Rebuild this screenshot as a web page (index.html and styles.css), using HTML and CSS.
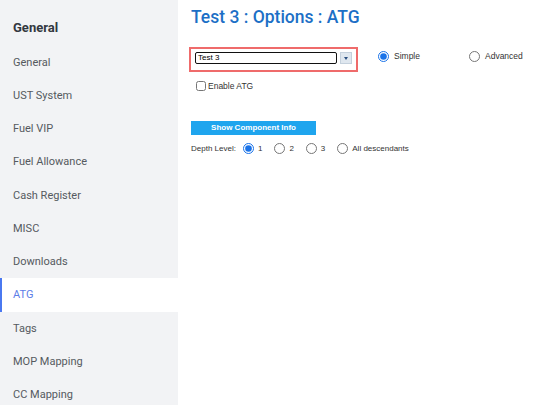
FILE: index.html
```html
<!DOCTYPE html>
<html>
<head>
<meta charset="utf-8">
<link rel="stylesheet" href="styles.css">
</head>
<body>
<div class="page">
  <nav class="sidebar">
    <div class="side-head">General</div>
    <div class="side-item">General</div>
    <div class="side-item">UST System</div>
    <div class="side-item">Fuel VIP</div>
    <div class="side-item">Fuel Allowance</div>
    <div class="side-item">Cash Register</div>
    <div class="side-item">MISC</div>
    <div class="side-item">Downloads</div>
    <div class="side-item active">ATG</div>
    <div class="side-item">Tags</div>
    <div class="side-item">MOP Mapping</div>
    <div class="side-item">CC Mapping</div>
  </nav>
  <main class="main">
    <h1 class="title">Test 3 : Options : ATG</h1>
    <div class="row-top">
      <div class="select-box">
        <div class="select-input">Test 3</div>
        <div class="select-btn"><span class="tri"></span></div>
      </div>
      <label class="opt opt-simple"><input type="radio" name="mode" checked><span>Simple</span></label>
      <label class="opt opt-adv"><input type="radio" name="mode"><span>Advanced</span></label>
    </div>
    <label class="enable"><input type="checkbox"><span>Enable ATG</span></label>
    <button class="info-btn">Show Component Info</button>
    <div class="depth">
      <span class="depth-label">Depth Level:</span>
      <label class="dopt"><input type="radio" name="depth" checked><span>1</span></label>
      <label class="dopt"><input type="radio" name="depth"><span>2</span></label>
      <label class="dopt"><input type="radio" name="depth"><span>3</span></label>
      <label class="dopt"><input type="radio" name="depth"><span>All descendants</span></label>
    </div>
  </main>
</div>
</body>
</html>
```
FILE: styles.css
```css
html, body {
  margin: 0;
  padding: 0;
  background: #ffffff;
}
.page {
  display: flex;
  width: 550px;
  height: 405px;
  overflow: hidden;
}
.sidebar {
  width: 178px;
  flex: none;
  background: #f2f3f5;
  font-family: Roboto, "Liberation Sans", sans-serif;
}
.side-head {
  height: 45.5px;
  box-sizing: border-box;
  padding: 20px 0 0 13px;
  line-height: 15px;
  font-size: 13px;
  font-weight: 700;
  color: #333840;
}
.side-item {
  height: 33.25px;
  line-height: 33.25px;
  padding-left: 13px;
  font-size: 11px;
  color: #555a60;
  box-sizing: border-box;
}
.side-item.active {
  background: #ffffff;
  color: #5b7ee8;
  border-left: 2px solid #4a78f0;
  padding-left: 11px;
}
.main {
  flex: 1;
  padding-left: 13px;
  font-family: "Liberation Sans", Arial, sans-serif;
}
.title {
  margin: 6px 0 0 0;
  font-family: Roboto, "Liberation Sans", sans-serif;
  font-size: 17.5px;
  font-weight: 500;
  line-height: 22px;
  color: #1c6fc6;
}
.row-top {
  display: flex;
  align-items: flex-start;
  margin-top: 19px;
  margin-left: -2px;
  height: 25px;
}
.select-box {
  width: 169px;
  height: 25px;
  box-sizing: border-box;
  border: 2px solid #ef6b6b;
  padding: 3px 4px 0 4px;
  display: flex;
  gap: 3px;
}
.select-input {
  width: 143px;
  height: 12px;
  box-sizing: border-box;
  border: 1.5px solid #111;
  border-radius: 2px;
  font-size: 8px;
  line-height: 9px;
  padding-left: 2px;
  color: #000;
}
.select-btn {
  width: 12px;
  height: 12px;
  box-sizing: border-box;
  background: #dfe7ef;
  border: 1px solid #c4d0dc;
  display: flex;
  align-items: center;
  justify-content: center;
}
.tri {
  width: 0;
  height: 0;
  border-left: 2.5px solid transparent;
  border-right: 2.5px solid transparent;
  border-top: 3px solid #2a4f80;
}
.opt {
  display: flex;
  align-items: center;
  font-size: 8.5px;
  color: #333;
  margin-top: 3px;
  height: 12px;
}
.opt input, .dopt input {
  width: 11px;
  height: 11px;
  margin: 0;
  accent-color: #1a73e8;
}
.opt-simple {
  margin-left: 20px;
  gap: 5px;
}
.opt-adv {
  margin-left: 49px;
  gap: 5px;
}
.enable {
  display: flex;
  align-items: center;
  gap: 2px;
  margin-top: 8px;
  margin-left: 5px;
  font-size: 8.5px;
  color: #333;
  height: 12px;
}
.enable input {
  width: 10px;
  height: 10px;
  margin: 0;
}
.info-btn {
  display: block;
  margin-top: 29px;
  width: 125px;
  height: 14px;
  padding: 0;
  border: none;
  background: #1fa5ee;
  color: #ffffff;
  font-family: "Liberation Sans", Arial, sans-serif;
  font-size: 8px;
  font-weight: 700;
  line-height: 14px;
}
.depth {
  display: flex;
  align-items: center;
  margin-top: 7px;
  height: 12px;
  font-size: 8px;
  color: #333;
}
.depth-label {
  margin-right: 7px;
}
.dopt {
  display: flex;
  align-items: center;
  gap: 4px;
  margin-right: 12px;
}
```
